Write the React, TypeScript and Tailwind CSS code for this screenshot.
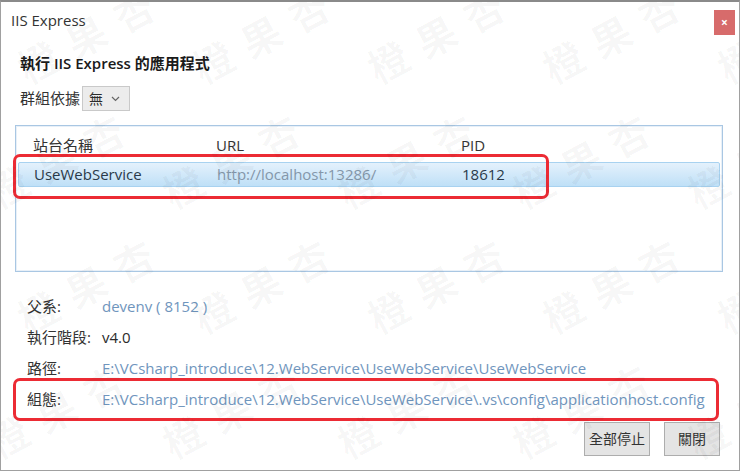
import React from 'react';

const marks = [
  { x: 20, y: 40 }, { x: 195, y: 40 }, { x: 370, y: 40 }, { x: 545, y: 40 }, { x: 720, y: 40 },
  { x: -10, y: 165 }, { x: 165, y: 165 }, { x: 340, y: 165 }, { x: 515, y: 165 }, { x: 690, y: 165 },
  { x: 20, y: 290 }, { x: 195, y: 290 }, { x: 370, y: 290 }, { x: 545, y: 290 }, { x: 720, y: 290 },
  { x: -10, y: 415 }, { x: 165, y: 415 }, { x: 340, y: 415 }, { x: 515, y: 415 }, { x: 690, y: 415 },
];

const details = [
  { label: '父系:', value: 'devenv ( 8152 )', blue: true },
  { label: '執行階段:', value: 'v4.0', blue: false },
  { label: '路徑:', value: 'E:\\VCsharp_introduce\\12.WebService\\UseWebService\\UseWebService', blue: true },
  { label: '組態:', value: 'E:\\VCsharp_introduce\\12.WebService\\UseWebService\\.vs\\config\\applicationhost.config', blue: true },
];

export default function App() {
  return (
    <div
      className="relative w-[740px] h-[471px] overflow-hidden bg-white border-t-2 border-t-[#8a8a8a] border-x border-b border-[#a0a0a0] text-[15px] text-[#2b2b2b]"
      style={{ fontFamily: '"Open Sans", "Noto Sans CJK TC", sans-serif' }}
    >
      {/* title bar */}
      <div className="flex justify-between items-start h-[40px]">
        <div className="pl-[10px] pt-[7px] text-[15px] text-[#333]">IIS Express</div>
        <button className="mt-[8px] mr-[4px] w-[21px] h-[25px] bg-[#d76b6b] text-white text-[12px] font-bold leading-none flex items-center justify-center">
          ×
        </button>
      </div>

      <div className="px-[19px]">
        <div className="mt-[10px] text-[15px] font-semibold text-[#1a1a1a]">執行 IIS Express 的應用程式</div>

        <div className="mt-[11px] flex items-center gap-[2px]">
          <span className="text-[#333]">群組依據</span>
          <div className="h-[25px] w-[48px] flex items-center gap-[8px] pl-[6px] bg-[#ececec] border border-[#c9c9c9] text-[14px]">
            <span>無</span>
            <svg width="9" height="6" viewBox="0 0 9 6" className="mt-[1px]">
              <path d="M1 1 L4.5 4.5 L8 1" fill="none" stroke="#666" strokeWidth="1.2" />
            </svg>
          </div>
        </div>
      </div>

      {/* list */}
      <div className="relative mx-[14px] mt-[14px] w-[708px] h-[147px] border border-[#a9c7e3] shadow-[inset_0_0_0_1px_#e8f0f8]">
        <div className="flex pt-[8px] pl-[17px] h-[36px] text-[#333]">
          <span className="w-[183px]">站台名稱</span>
          <span className="w-[245px]">URL</span>
          <span>PID</span>
        </div>
        <div className="mx-[2px] h-[25px] flex items-center pl-[15px] rounded-[2px] border border-[#a8d2f0] bg-gradient-to-b from-[#e4f1fc] to-[#bfe0f7]">
          <span className="w-[183px] text-[#2a3a4a]">UseWebService</span>
          <span className="w-[245px] text-[#8497aa]">http://localhost:13286/</span>
          <span className="text-[#2a3a4a]">18612</span>
        </div>
        <div className="absolute left-[-3px] top-[28px] w-[536px] h-[45px] border-[3px] border-[#ec2b34] rounded-[7px]" />
      </div>

      {/* details */}
      <div className="relative mt-[19px] pl-[26px] flex flex-col">
        {details.map((d) => (
          <div key={d.label} className="flex h-[31px] items-center">
            <span className="w-[75px] text-[#333]">{d.label}</span>
            <span className={d.blue ? 'text-[#6f95bd]' : 'text-[#2b2b2b]'}>{d.value}</span>
          </div>
        ))}
        <div className="absolute left-[12px] top-[87px] w-[706px] h-[43px] border-[3px] border-[#ec2b34] rounded-[7px]" />
      </div>

      {/* buttons */}
      <div className="flex justify-end gap-[14px] pr-[19px] mt-[7px]">
        <button className="w-[66px] h-[34px] bg-[#e4e4e4] border border-[#adadad] text-[#333] text-[14px]">全部停止</button>
        <button className="w-[56px] h-[34px] bg-[#e4e4e4] border border-[#adadad] text-[#333] text-[14px]">關閉</button>
      </div>

      {/* watermark */}
      {marks.map((m, i) => (
        <div
          key={i}
          className="absolute pointer-events-none select-none text-[40px] tracking-[14px] text-black/[0.03] font-bold -rotate-[28deg] origin-left whitespace-nowrap"
          style={{ left: m.x, top: m.y }}
        >
          橙果杏
        </div>
      ))}
    </div>
  );
}
